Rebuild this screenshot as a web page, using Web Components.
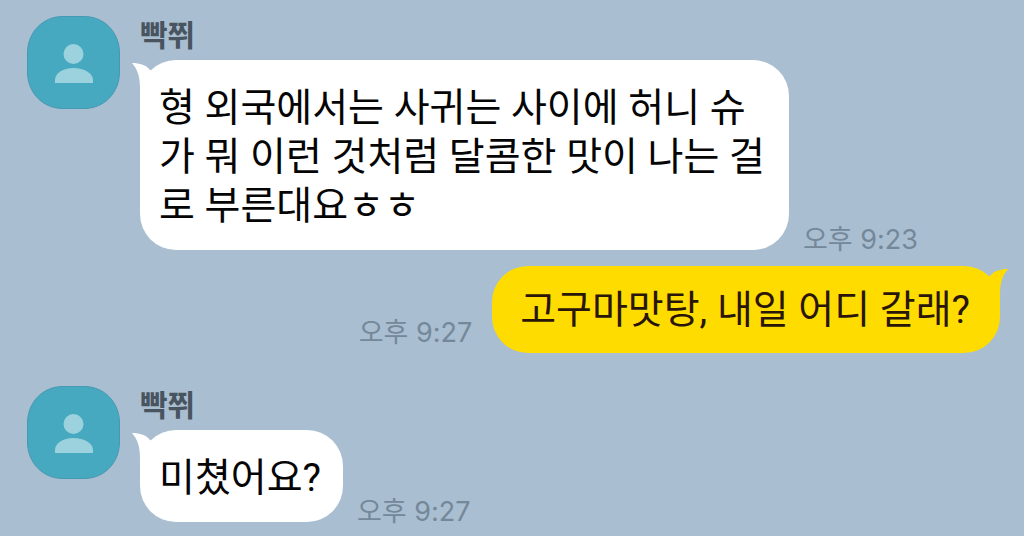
<!DOCTYPE html>
<html lang="ko">
<head>
<meta charset="utf-8">
<meta name="viewport" content="width=device-width, initial-scale=1">
<title>채팅</title>
<style>
  html { background: #a9bed0; }
  body { margin: 0; font-family: Roboto, "Noto Sans CJK KR", sans-serif; }
</style>
</head>
<body>
<chat-thread>
  <chat-message name="빡쮜" time="오후 9:23">형 외국에서는 사귀는 사이에 허니 슈가 뭐 이런 것처럼 달콤한 맛이 나는 걸로 부른대요ㅎㅎ</chat-message>
  <chat-message mine time="오후 9:27">고구마맛탕, 내일 어디 갈래?</chat-message>
  <chat-message name="빡쮜" time="오후 9:27">미쳤어요?</chat-message>
</chat-thread>

<template id="thread-template">
  <style>
    :host { display: block; }
    main { display: flex; flex-direction: column; gap: 16px; padding: 16px 24px 14px 27px; }
    ::slotted([mine]) { margin-bottom: 17px; }
  </style>
  <main><slot></slot></main>
</template>

<template id="avatar-template">
  <style>
    :host { display: block; width: 93px; height: 93px; flex: none; }
    svg { display: block; width: 100%; height: 100%; }
  </style>
  <svg viewBox="0 0 93 93" aria-hidden="true">
    <path d="M36 .5H57C78 .5 92.500 17 92.500 37V56C92.500 76 78 92.500 57 92.500H36C15 92.500 .5 76 .5 56V37C.5 17 15 .5 36 .5Z" fill="#46a9c0" stroke="#4599b2"/>
    <circle cx="46.500" cy="38" r="10" fill="#9bd2de"/>
    <path d="M28 67V64C28 57 36 52 46.500 52S66 57 66 64V67Z" fill="#9bd2de"/>
  </svg>
</template>

<template id="bubble-template">
  <style>
    :host { display: block; position: relative; min-width: 0; }
    p {
      margin: 0; padding: 24px 22px 19px 19px; border-radius: 36px;
      background: #fff; color: #050505;
      font-size: 39px; line-height: 49px;
    }
    svg { position: absolute; left: -8px; top: 3px; width: 26px; height: 40px; fill: #fff; }
    :host([mine]) p { padding: 20px 30px 18px 28px; background: #ffdc00; color: #2a1608; }
    :host([mine]) svg { left: auto; right: -8px; transform: scaleX(-1); fill: #ffdc00; }
  </style>
  <svg viewBox="0 0 26 40" aria-hidden="true"><path d="M0 0C8 0 14 2 18 7L26 12V38L8 36V26C8 14 6 7 0 0Z"/></svg>
  <p><slot></slot></p>
</template>

<template id="message-template">
  <style>
    :host { display: block; }
    article { display: flex; gap: 20px; }
    .body { flex: 1; min-width: 0; }
    h2 {
      margin: 0; height: 44px; color: #48545f;
      font-size: 30px; line-height: 40px; font-weight: 700;
    }
    .line { display: flex; align-items: flex-end; gap: 14px; }
    chat-bubble { max-width: calc(100% - 211px); }
    time {
      flex: none; color: #74889a; white-space: nowrap;
      font-family: Inter, "Noto Sans CJK KR", sans-serif;
      font-size: 27px; line-height: 32px; font-weight: 400;
      margin-bottom: -6px;
    }
    :host([mine]) .line { flex-direction: row-reverse; gap: 20px; }
    :host([mine]) time { margin-bottom: 4px; }
    :host([mine]) h2, :host([mine]) chat-avatar { display: none; }
  </style>
  <article>
    <chat-avatar></chat-avatar>
    <div class="body">
      <h2></h2>
      <div class="line"><chat-bubble><slot></slot></chat-bubble><time></time></div>
    </div>
  </article>
</template>

<script>
  class TemplateElement extends HTMLElement {
    constructor() {
      super();
      const template = document.getElementById(this.constructor.template);
      this.attachShadow({ mode: "open" }).append(template.content.cloneNode(true));
    }
  }
  class ChatThread extends TemplateElement { static template = "thread-template"; }
  class ChatAvatar extends TemplateElement { static template = "avatar-template"; }
  class ChatBubble extends TemplateElement { static template = "bubble-template"; }
  class ChatMessage extends TemplateElement {
    static template = "message-template";
    connectedCallback() {
      const root = this.shadowRoot;
      root.querySelector("h2").textContent = this.getAttribute("name") || "";
      root.querySelector("time").textContent = this.getAttribute("time");
      root.querySelector("chat-bubble").toggleAttribute("mine", this.hasAttribute("mine"));
    }
  }
  customElements.define("chat-avatar", ChatAvatar);
  customElements.define("chat-bubble", ChatBubble);
  customElements.define("chat-message", ChatMessage);
  customElements.define("chat-thread", ChatThread);
</script>
</body>
</html>
